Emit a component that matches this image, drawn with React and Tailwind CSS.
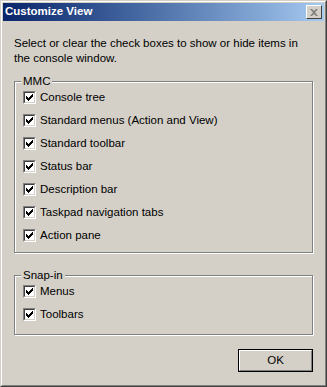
import React from "react";

const mmcItems = [
  "Console tree",
  "Standard menus (Action and View)",
  "Standard toolbar",
  "Status bar",
  "Description bar",
  "Taskpad navigation tabs",
  "Action pane",
];

const snapItems = ["Menus", "Toolbars"];

const CheckRow = ({ label }) => (
  <div className="flex items-center h-[23px]">
    <div className="w-[13px] h-[13px] border-t border-l border-t-[#808080] border-l-[#808080] border-b border-r border-b-white border-r-white">
      <div className="w-[11px] h-[11px] border-t border-l border-t-[#404040] border-l-[#404040] border-b border-r border-b-[#d4d0c8] border-r-[#d4d0c8] bg-white flex items-center justify-center">
        <svg width="7" height="7" viewBox="0 0 7 7">
          <path d="M0 2h1v1h1v1h1V3h1V2h1V1h1V0h1v3H6v1H5v1H4v1H3v1H2V6H1V5H0z" fill="#000" />
        </svg>
      </div>
    </div>
    <span className="ml-[4px]">{label}</span>
  </div>
);

const GroupBox = ({ title, items, className }) => (
  <div className={`relative border border-[#808080] shadow-[1px_1px_0_#fff,inset_1px_1px_0_#fff] ${className}`}>
    <span className="absolute left-[6px] top-[-8px] bg-[#d4d0c8] px-[2px] leading-[14px]">{title}</span>
    <div className="flex flex-col pl-[8px]">
      {items.map((item) => (
        <CheckRow key={item} label={item} />
      ))}
    </div>
  </div>
);

export default function App() {
  return (
    <div
      className="w-[327px] h-[387px] bg-[#d4d0c8] text-black text-[11.5px] border border-t-[#d4d0c8] border-l-[#d4d0c8] border-b-[#404040] border-r-[#404040]"
      style={{ fontFamily: "Tahoma, 'Liberation Sans', sans-serif" }}
    >
      <div className="w-full h-full border border-t-white border-l-white border-b-[#808080] border-r-[#808080] p-[1px] flex flex-col">
        <div className="h-[18px] flex items-center justify-between pl-[2px] pr-[2px] bg-gradient-to-r from-[#0a246a] to-[#a6caf0]">
          <span className="text-white font-bold text-[11.5px]">Customize View</span>
          <div className="w-[16px] h-[14px] bg-[#d4d0c8] border border-t-white border-l-white border-b-[#404040] border-r-[#404040] flex items-center justify-center">
            <svg width="8" height="7" viewBox="0 0 8 7">
              <path d="M0 0h2l2 2 2-2h2L5 3.5 8 7H6L4 5 2 7H0l3-3.5z" fill="#808080" />
            </svg>
          </div>
        </div>
        <div className="flex-1 flex flex-col px-[11px]">
          <p className="mt-[15px] leading-[15px] pr-[4px]">
            Select or clear the check boxes to show or hide items in the console window.
          </p>
          <GroupBox title="MMC" items={mmcItems} className="mt-[15px] h-[172px] pt-[4px]" />
          <GroupBox title="Snap-in" items={snapItems} className="mt-[22px] h-[60px] pt-[4px]" />
          <div className="flex justify-end mt-[14px]">
            <button className="w-[75px] h-[23px] bg-[#d4d0c8] border border-black flex items-center justify-center">
              <div className="w-full h-full border border-t-white border-l-white border-b-[#808080] border-r-[#808080] flex items-center justify-center">
                OK
              </div>
            </button>
          </div>
        </div>
      </div>
    </div>
  );
}
